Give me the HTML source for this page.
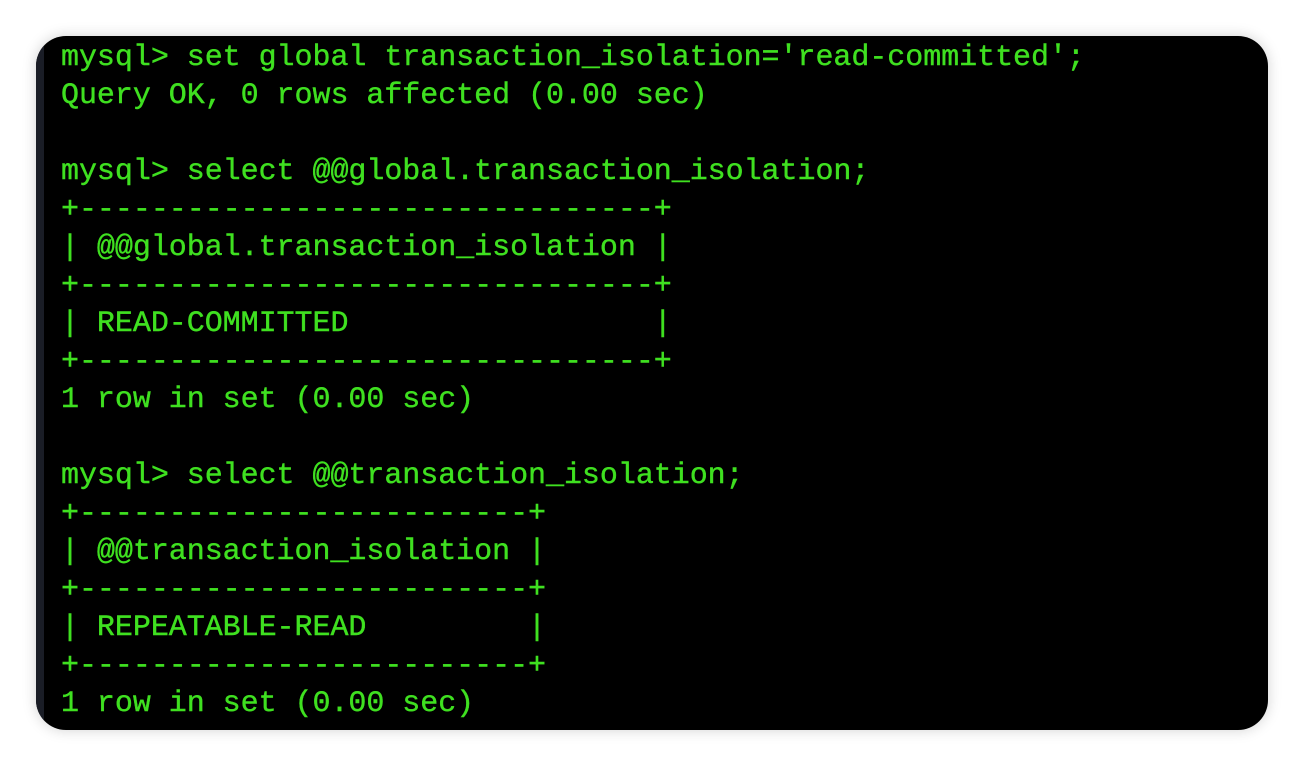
<!DOCTYPE html>
<html><head><style>
html,body{margin:0;padding:0;background:#fff;width:1304px;height:766px;overflow:hidden}
.box{position:absolute;left:36px;top:36px;width:1232px;height:694px;background:#000;border-radius:30px;box-shadow:0 0 14px rgba(0,0,0,0.18);overflow:hidden}
.edge{position:absolute;left:0;top:0;width:8px;height:100%;background:#1a1d26}
pre{position:absolute;left:25px;top:3px;margin:0;font-family:"Liberation Mono",monospace;font-size:30px;line-height:38px;color:#3fe020;letter-spacing:-0.04px;-webkit-text-stroke:0.4px #3fe020}
</style></head><body>
<div class="box"><div class="edge"></div>
<pre>mysql&gt; set global transaction_isolation='read-committed';
Query OK, 0 rows affected (0.00 sec)

mysql&gt; select @@global.transaction_isolation;
+--------------------------------+
| @@global.transaction_isolation |
+--------------------------------+
| READ-COMMITTED                 |
+--------------------------------+
1 row in set (0.00 sec)

mysql&gt; select @@transaction_isolation;
+-------------------------+
| @@transaction_isolation |
+-------------------------+
| REPEATABLE-READ         |
+-------------------------+
1 row in set (0.00 sec)</pre>
</div>
</body></html>
